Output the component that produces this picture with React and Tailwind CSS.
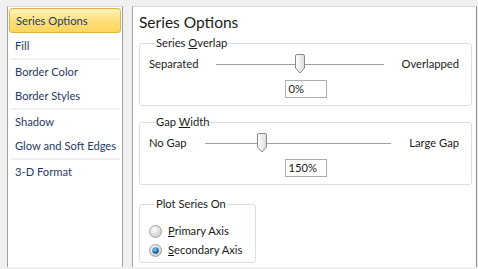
import React, { useState } from 'react';

const navItems = [
  { label: 'Series Options' },
  { label: 'Fill', sep: true },
  { label: 'Border Color' },
  { label: 'Border Styles', sep: true },
  { label: 'Shadow' },
  { label: 'Glow and Soft Edges', sep: true },
  { label: '3-D Format' },
];

function Thumb() {
  return (
    <svg width="10" height="20" viewBox="0 0 10 20" className="absolute top-[-10px]" style={{ marginLeft: -5 }}>
      <defs>
        <linearGradient id="thumbFill" x1="0" y1="0" x2="1" y2="0">
          <stop offset="0" stopColor="#ffffff" />
          <stop offset="1" stopColor="#dcdcdc" />
        </linearGradient>
      </defs>
      <path d="M2 0.5 H8 Q9.5 0.5 9.5 2 V14 L5 19 L0.5 14 V2 Q0.5 0.5 2 0.5 Z" fill="url(#thumbFill)" stroke="#8a8a8a" />
    </svg>
  );
}

function SliderGroup({ title, hotkey, rest, left, right, pos, value }) {
  return (
    <fieldset className="border border-[#d5dfe5] rounded-[3px] pl-[9px] pr-[12px]">
      <legend className="ml-[6px] px-[1px] leading-[16px] text-[#1a1a1a]">
        {title}<span className="underline">{hotkey}</span>{rest}
      </legend>
      <div className="flex items-center gap-[18px] mt-[3px] h-[20px] whitespace-nowrap">
        <span>{left}</span>
        <div className="relative flex-1 h-px bg-[#a0a0a0]">
          <div className="absolute top-0" style={{ left: `${pos}%` }}>
            <Thumb />
          </div>
        </div>
        <span>{right}</span>
      </div>
      <div className="flex justify-center mt-[6px] mb-[7px] pl-[3px]">
        <div className="w-[42px] h-[18px] border border-[#abadb3] bg-white px-[3px] leading-[16px]">{value}</div>
      </div>
    </fieldset>
  );
}

function Radio({ checked }) {
  return (
    <svg width="13" height="13" viewBox="0 0 13 13" className="shrink-0">
      <defs>
        <radialGradient id="radOff" cx="0.4" cy="0.35" r="0.7">
          <stop offset="0" stopColor="#ffffff" />
          <stop offset="1" stopColor="#c8c8c8" />
        </radialGradient>
        <radialGradient id="radOn" cx="0.4" cy="0.35" r="0.7">
          <stop offset="0" stopColor="#8fd3f5" />
          <stop offset="0.6" stopColor="#1c7bb8" />
          <stop offset="1" stopColor="#0b3f6a" />
        </radialGradient>
      </defs>
      <circle cx="6.5" cy="6.5" r="6" fill="url(#radOff)" stroke="#a3a3a3" />
      {checked && <circle cx="6.5" cy="6.5" r="3.2" fill="url(#radOn)" />}
    </svg>
  );
}

export default function App() {
  const [active] = useState('Series Options');
  const [axis, setAxis] = useState('secondary');

  return (
    <div className="w-[478px] h-[269px] bg-[#f0f0f0] flex gap-[9px] pl-[7px] pt-[6px] pb-[2px] text-[11.2px] overflow-hidden" style={{ fontFamily: 'Lato, "Noto Sans", sans-serif' }}>
      {/* left nav */}
      <div className="w-[116px] bg-white border-l border-r border-[#a0a0a0] border-t border-t-[#dadada] pt-[1px] px-[1px]">
        {navItems.map(item => (
          <React.Fragment key={item.label}>
            <div className={`flex items-center px-[6px] pt-[1px] whitespace-nowrap text-[#1f3a68] ${
              item.label === active
                ? 'h-[25px] mb-[1px] rounded-[3px] border border-[#e0b34f] bg-gradient-to-b from-[#fff2b8] via-[#ffe07e] to-[#ffd55a]'
                : 'h-[24px]'
            }`}>
              {item.label}
            </div>
            {item.sep && <div className="h-[2px] bg-[#eef0f2] mx-[1px]" />}
          </React.Fragment>
        ))}
      </div>

      {/* right content */}
      <div className="flex-1 mr-[1px] bg-white border-l border-[#a0a0a0] border-r border-r-[#8a8a8a] border-t border-t-[#dadada] pl-[6px] pr-[4px] text-[#1a1a1a]">
        <h1 className="text-[15.5px] leading-[20px] mt-[5px] mb-[3px] text-[#1a1a1a]">Series Options</h1>
        <div className="flex flex-col">
          <SliderGroup title="Series " hotkey="O" rest="verlap" left="Separated" right="Overlapped" pos={50} value="0%" />
          <div className="h-[8px]" />
          <SliderGroup title="Gap " hotkey="W" rest="idth" left="No Gap" right="Large Gap" pos={31} value="150%" />
          <div className="h-[11px]" />
          <fieldset className="w-[117px] border border-[#d5dfe5] rounded-[3px] pl-[9px] pb-[4px]">
            <legend className="ml-[6px] px-[1px] leading-[16px]">Plot Series On</legend>
            <div className="flex flex-col gap-[3px] mt-[11px] whitespace-nowrap">
              <label className="flex items-center gap-[6px] h-[16px]" onClick={() => setAxis('primary')}>
                <Radio checked={axis === 'primary'} />
                <span><span className="underline">P</span>rimary Axis</span>
              </label>
              <label className="flex items-center gap-[6px] h-[16px]" onClick={() => setAxis('secondary')}>
                <Radio checked={axis === 'secondary'} />
                <span><span className="underline">S</span>econdary Axis</span>
              </label>
            </div>
          </fieldset>
        </div>
      </div>
    </div>
  );
}
